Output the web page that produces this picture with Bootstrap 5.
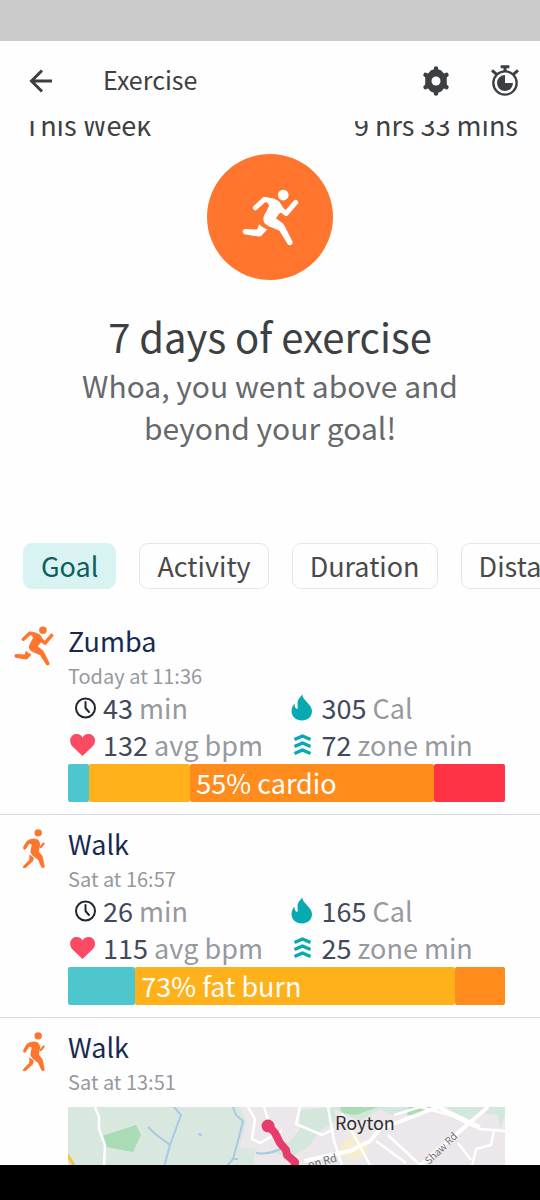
<!DOCTYPE html>
<html lang="en">
<head>
<meta charset="utf-8">
<meta name="viewport" content="width=device-width, initial-scale=1">
<title>Exercise</title>
<link href="https://cdn.jsdelivr.net/npm/bootstrap@5.3.0/dist/css/bootstrap.min.css" rel="stylesheet">
<style>
  :root { --ink: #3c4043; --soft: #96999e; --brand: #ff752e; }
  body { font-family: "Noto Sans CJK SC", "Noto Sans", sans-serif; color: var(--ink); font-size: 27px; line-height: 36px; background: #fefefe; }
  .status-strip { height: 41px; background: #cbcbcb; }
  .app-header { height: 80px; padding: 0 19px 0 24px; }
  .app-header h1 { font-size: 25px; line-height: 36px; margin-left: 47px; padding-bottom: 4px; }
  .icon-btn { width: 32px; height: 32px; padding: 0; border: 0; color: var(--ink); display: flex; }
  .icon-btn svg { width: 100%; height: 100%; }
  .icon-btn + .icon-btn { margin-left: 37px; }
  .scroller { min-height: 0; }
  .week-row { margin-top: -14px; padding: 0 22px 0 24px; line-height: 36px; }
  .hero { padding: 11px 56px 0; }
  .hero-disc { width: 126px; height: 126px; background: var(--brand); color: #fff; }
  .hero-disc svg { width: 57px; height: 57px; }
  .hero h2 { font-size: 40px; line-height: 56px; margin: 28px 0 0; }
  .hero p { font-size: 30px; line-height: 42px; color: #66696c; margin: 0; }
  .chips { gap: 23px; padding: 95px 0 0 23px; }
  .chip { height: 46px; padding: 0 17px; font-size: 27px; line-height: 42px; border: 1px solid #e6e6e6; border-radius: 9px; color: #4a4a4a; }
  .chip.is-on { background: #d9f3f3; border-color: #d9f3f3; color: #0b5f5b; }
  .entries { margin-top: 23px; }
  .entry { padding: 8px 35px 12px 14px; border-bottom: 1px solid #d8dada; }
  .entry-icon { width: 54px; color: var(--brand); padding-top: 6px; }
  .entry-icon svg { width: 40px; height: 40px; display: block; }
  .entry h3 { font-size: 27px; line-height: 42px; margin: 0; }
  .entry h3 a { color: #17294f; }
  .when { font-size: 20px; line-height: 27px; color: var(--soft); }
  .stats { padding-bottom: 1px; }
  .stat { line-height: 37px; gap: 5px; color: #42495a; white-space: nowrap; }
  .stat svg { width: 30px; height: 30px; flex: none; }
  .unit { color: var(--soft); }
  .zones { height: 38px; }
  .zones div { border-radius: 2px; color: #fff; padding-left: 6px; line-height: 37px; white-space: nowrap; }
  .zones .z-light { background: #4dc7cd; padding: 0; }
  .z-fat { background: #ffb11b; }
  .z-cardio { background: #ff8c1c; }
  .z-peak { background: #ff3345; }
  .route { width: 100%; margin-top: 12px; }
  .nav-strip { height: 35px; background: #000; }
</style>
</head>
<body class="vh-100 d-flex flex-column overflow-hidden">
<svg width="0" height="0" class="position-absolute" aria-hidden="true">
  <symbol id="run" viewBox="156 131 170 170">
    <g fill="none" stroke="currentColor" stroke-width="15" stroke-linecap="round" stroke-linejoin="round">
      <path d="M196 187L223 162L248 167"/>
      <path d="M262 184L288 204L316 171"/>
    </g>
    <circle cx="279" cy="149" r="16" fill="currentColor"/>
    <path fill="currentColor" d="M222 155L252 161Q266 165 272 176L284 196L268 203L257 218L277 233Q281 237 284 243L307 288Q308 295 302 298Q296 300 292 295L267 255L236 242Q214 232 221 212L237 181Z"/>
    <path fill="currentColor" d="M207 236Q216 246 231 252L216 268Q212 273 206 273L163 266Q157 263 158 256Q160 250 166 250L201 252Z"/>
  </symbol>
  <symbol id="walk" viewBox="40 39 124 124">
    <circle cx="115" cy="51" r="11.500" fill="currentColor"/>
    <path fill="currentColor" d="M84 73Q98 65 110 70Q120 74 121 88L118 104Q116 110 121 114Q128 120 130 130L135 155Q135 160 130 160Q126 160 124 156L115 135L97 121Q89 113 92 102L95 87L87 85L77 101Q73 105 69 101Q67 98 70 92L77 80Q79 76 84 73Z"/>
    <path fill="currentColor" d="M88 117L102 129L98 140L76 160H67L70 152L87 135Z"/>
    <path fill="none" stroke="currentColor" stroke-width="7" stroke-linecap="round" d="M123 95L132 84"/>
  </symbol>
  <symbol id="clock" viewBox="-3 -1 30 30">
    <g fill="none" stroke="#20262e" stroke-width="2" stroke-linecap="round" stroke-linejoin="round"><circle cx="14.500" cy="14" r="9.500"/><path d="M14.500 8V14L18 18"/></g>
  </symbol>
  <symbol id="heart" viewBox="0 0 30 30">
    <path fill="#fa4b62" d="M14.500 26L4.500 16.500C.5 12.500 1.500 4 8.500 4C11.500 4 13.500 5.500 14.500 7.500C15.500 5.500 17.500 4 20.500 4C27.500 4 29 12.500 24.500 16.500Z"/>
  </symbol>
  <symbol id="flame" viewBox="0 0 30 30">
    <path fill="#08aab2" d="M15.500 1.500C15 7 25 11 25 18C25 24 20.500 27.500 15 27.500C9 27.500 4.500 23.500 4.500 18C4.500 14 6.500 12 7.500 10.500C7.500 13 8 15.500 10 16C12 15 9.500 11 11 7.500C12 4.500 14 3.500 15.500 1.500Z"/>
  </symbol>
  <symbol id="zone" viewBox="0 0 30 30">
    <path fill="none" stroke="#08aab2" stroke-width="3.500" stroke-linejoin="round" d="M7.500 9.500L15.500 6L23.500 9.500M7.500 16.500L15.500 13L23.500 16.500M7.500 23.500L15.500 20L23.500 23.500"/>
  </symbol>
</svg>

<div class="status-strip flex-shrink-0"></div>

<header class="app-header d-flex align-items-center flex-shrink-0">
  <button class="icon-btn btn" type="button" aria-label="Back">
    <svg viewBox="0 0 32 32" fill="none" stroke="currentColor" stroke-width="3"><path d="M28 16H8M18 5.500L7.500 16L18 26.500"/></svg>
  </button>
  <h1 class="fw-normal mb-0">Exercise</h1>
  <button class="icon-btn btn ms-auto" type="button" aria-label="Settings">
    <svg viewBox="2 2 92 92"><g stroke="currentColor" stroke-width="13" stroke-linecap="round"><path d="M48 12V84M18 30.500L78 65.500M18 65.500L78 30.500"/></g><path fill="currentColor" d="M48 13L62 17L79 34L79 62L62 79L48 83L34 79L17 62L17 34L34 17Z"/><circle cx="48" cy="48" r="13" fill="#fefefe"/></svg>
  </button>
  <button class="icon-btn btn" type="button" aria-label="Start timer">
    <svg viewBox="0 2 96 96"><g fill="none" stroke="currentColor" stroke-width="7"><circle cx="48" cy="56" r="35"/><path d="M48 8V20M35 7H61M9 18L23 30M87 18L73 30" stroke-width="9"/></g><path fill="currentColor" d="M48 56V32A24 24 0 1 0 72 56Z"/></svg>
  </button>
</header>

<main class="scroller flex-grow-1 overflow-hidden">
  <div class="week-row d-flex justify-content-between"><span>This Week</span><span>9 hrs 33 mins</span></div>

  <section class="hero text-center">
    <div class="hero-disc rounded-circle mx-auto d-flex align-items-center justify-content-center"><svg aria-hidden="true"><use href="#run"/></svg></div>
    <h2 class="fw-normal">7 days of exercise</h2>
    <p>Whoa, you went above and beyond your goal!</p>
  </section>

  <nav class="chips d-flex overflow-hidden" aria-label="Views">
    <button class="btn chip is-on flex-shrink-0" type="button">Goal</button>
    <button class="btn chip flex-shrink-0" type="button">Activity</button>
    <button class="btn chip flex-shrink-0" type="button">Duration</button>
    <button class="btn chip flex-shrink-0" type="button">Distance</button>
  </nav>

  <section class="entries">
    <article class="entry d-flex">
      <div class="entry-icon flex-shrink-0"><svg aria-hidden="true"><use href="#run"/></svg></div>
      <div class="flex-grow-1">
        <h3 class="fw-normal"><a class="text-decoration-none" href="#zumba">Zumba</a></h3>
        <div class="when">Today at 11:36</div>
        <div class="stats row g-0">
          <div class="col-6 stat d-flex align-items-center"><svg aria-hidden="true"><use href="#clock"/></svg><span>43 <span class="unit">min</span></span></div>
          <div class="col-6 stat d-flex align-items-center"><svg aria-hidden="true"><use href="#flame"/></svg><span>305 <span class="unit">Cal</span></span></div>
          <div class="col-6 stat d-flex align-items-center"><svg aria-hidden="true"><use href="#heart"/></svg><span>132 <span class="unit">avg bpm</span></span></div>
          <div class="col-6 stat d-flex align-items-center"><svg aria-hidden="true"><use href="#zone"/></svg><span>72 <span class="unit">zone min</span></span></div>
        </div>
        <div class="zones d-flex">
          <div class="z-light" style="width:4.7%"></div><div class="z-fat" style="width:23.3%"></div><div class="z-cardio" style="width:55.7%">55% cardio</div><div class="z-peak" style="width:16.3%"></div>
        </div>
      </div>
    </article>

    <article class="entry d-flex">
      <div class="entry-icon flex-shrink-0"><svg aria-hidden="true"><use href="#walk"/></svg></div>
      <div class="flex-grow-1">
        <h3 class="fw-normal"><a class="text-decoration-none" href="#walk-1657">Walk</a></h3>
        <div class="when">Sat at 16:57</div>
        <div class="stats row g-0">
          <div class="col-6 stat d-flex align-items-center"><svg aria-hidden="true"><use href="#clock"/></svg><span>26 <span class="unit">min</span></span></div>
          <div class="col-6 stat d-flex align-items-center"><svg aria-hidden="true"><use href="#flame"/></svg><span>165 <span class="unit">Cal</span></span></div>
          <div class="col-6 stat d-flex align-items-center"><svg aria-hidden="true"><use href="#heart"/></svg><span>115 <span class="unit">avg bpm</span></span></div>
          <div class="col-6 stat d-flex align-items-center"><svg aria-hidden="true"><use href="#zone"/></svg><span>25 <span class="unit">zone min</span></span></div>
        </div>
        <div class="zones d-flex">
          <div class="z-light" style="width:15.4%"></div><div class="z-fat" style="width:73.2%">73% fat burn</div><div class="z-cardio" style="width:11.4%"></div>
        </div>
      </div>
    </article>

    <article class="entry d-flex">
      <div class="entry-icon flex-shrink-0"><svg aria-hidden="true"><use href="#walk"/></svg></div>
      <div class="flex-grow-1">
        <h3 class="fw-normal"><a class="text-decoration-none" href="#walk-1351">Walk</a></h3>
        <div class="when">Sat at 13:51</div>
        <svg class="route d-block" viewBox="0 0 437 120" role="img" aria-label="Route map near Royton">
          <rect width="437" height="120" fill="#d9e8df"/>
          <path fill="#ece7eb" d="M172 0H437V120H186V48L190 42L171 40Q176 28 178 14Z"/>
          <path fill="#d3e7dc" d="M232 3L266 0L268 14L252 24L240 40L226 48L214 48L202 46L222 34L232 22ZM262 0H345L326 9L312 2L292 14L274 6ZM380 0H437V8L432 22L430 8L412 6L400 16L384 12Z"/>
          <path fill="#a9dcb4" d="M34 29L68 18L73 28L65 45L38 40ZM272 0H310L288 8L274 6ZM341 0H372L346 9L339 8Z"/>
          <path fill="#f5edcf" d="M274 34L284 30L280 22L284 18L290 30L302 36L296 50L284 54L270 46Z"/>
          <g fill="none" stroke="#fff" stroke-width="2.500" stroke-linejoin="round">
            <path d="M27 0L31 10L31 22L37 38L36 60V120"/>
            <path d="M180 0L187 12L184 32L192 36L206 28L214 24M196 0L200 12M232 0L228 17L254 28L266 22M260 0L266 34L274 58M274 6L302 58L320 100M326 8L352 0L382 8L412 22L437 24M426 24L423 38L408 42L404 60M390 36L403 53M320 28L352 58M308 34L338 56"/>
            <path stroke-width="4" d="M236 54L282 44L302 34L312 22L370 0L412 20M346 64L378 36L420 0"/>
          </g>
          <path fill="none" stroke="#a9c8e8" stroke-width="2" d="M106 0L113 8L102 38L96 60M80 20L86 26L102 38M165 0L168 8L175 14L171 30L165 52H170M165 52L158 60M188 46Q200 48 212 42M130 27L134 28"/>
          <path fill="none" stroke="#f3c33b" stroke-width="3" d="M-1 47L7 60"/>
          <path fill="none" stroke="#e63c6d" stroke-width="8" stroke-linecap="round" stroke-linejoin="round" d="M201 19L207 26L212 36L218 43L219 48L227 55L226 64"/>
          <circle cx="200" cy="19" r="6.500" fill="#e63c6d"/>
          <g fill="#6b6e73"><text font-size="11" transform="translate(241 62) rotate(-15)">on Rd</text><text font-size="10" transform="translate(361 58) rotate(-44)">Shaw Rd</text></g>
          <text x="267" y="23" font-size="18" fill="#2c3034">Royton</text>
        </svg>
      </div>
    </article>
  </section>
</main>

<div class="nav-strip flex-shrink-0"></div>
<script src="https://cdn.jsdelivr.net/npm/bootstrap@5.3.0/dist/js/bootstrap.bundle.min.js"></script>
</body>
</html>
